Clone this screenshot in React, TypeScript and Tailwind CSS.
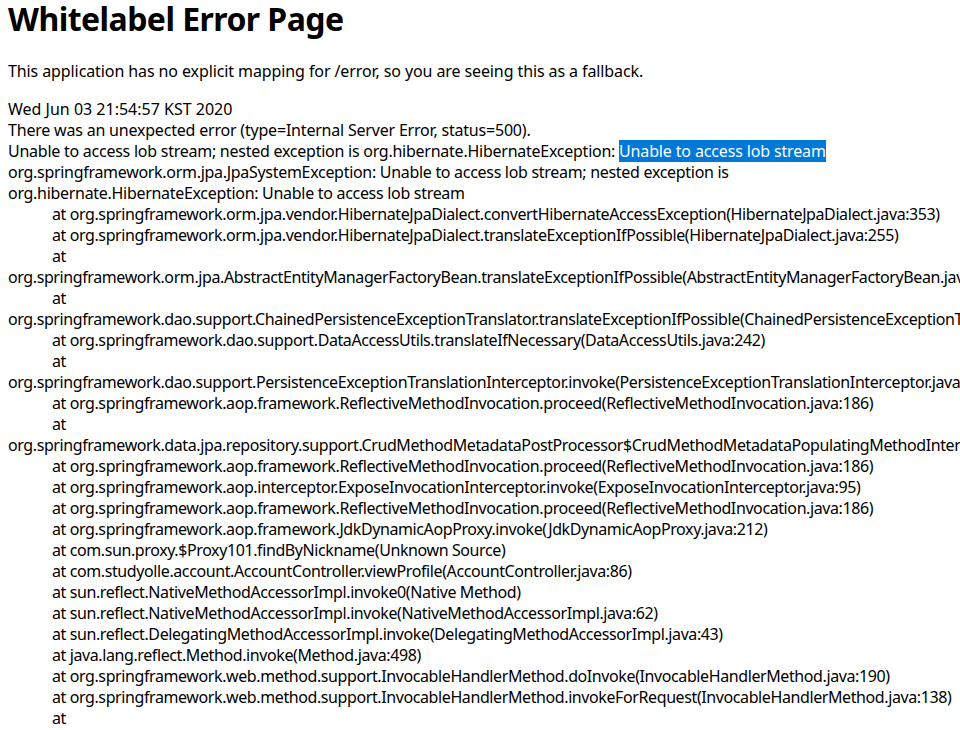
import React from "react";

const lines: { indent: boolean; text: string }[] = [
  { indent: true, text: "at org.springframework.orm.jpa.vendor.HibernateJpaDialect.convertHibernateAccessException(HibernateJpaDialect.java:353)" },
  { indent: true, text: "at org.springframework.orm.jpa.vendor.HibernateJpaDialect.translateExceptionIfPossible(HibernateJpaDialect.java:255)" },
  { indent: true, text: "at" },
  { indent: false, text: "org.springframework.orm.jpa.AbstractEntityManagerFactoryBean.translateExceptionIfPossible(AbstractEntityManagerFactoryBean.java:527)" },
  { indent: true, text: "at" },
  { indent: false, text: "org.springframework.dao.support.ChainedPersistenceExceptionTranslator.translateExceptionIfPossible(ChainedPersistenceExceptionTranslator.java:61)" },
  { indent: true, text: "at org.springframework.dao.support.DataAccessUtils.translateIfNecessary(DataAccessUtils.java:242)" },
  { indent: true, text: "at" },
  { indent: false, text: "org.springframework.dao.support.PersistenceExceptionTranslationInterceptor.invoke(PersistenceExceptionTranslationInterceptor.java:154)" },
  { indent: true, text: "at org.springframework.aop.framework.ReflectiveMethodInvocation.proceed(ReflectiveMethodInvocation.java:186)" },
  { indent: true, text: "at" },
  { indent: false, text: "org.springframework.data.jpa.repository.support.CrudMethodMetadataPostProcessor$CrudMethodMetadataPopulatingMethodInterceptor.invoke(CrudMethodMetadataPostProcessor.java:149)" },
  { indent: true, text: "at org.springframework.aop.framework.ReflectiveMethodInvocation.proceed(ReflectiveMethodInvocation.java:186)" },
  { indent: true, text: "at org.springframework.aop.interceptor.ExposeInvocationInterceptor.invoke(ExposeInvocationInterceptor.java:95)" },
  { indent: true, text: "at org.springframework.aop.framework.ReflectiveMethodInvocation.proceed(ReflectiveMethodInvocation.java:186)" },
  { indent: true, text: "at org.springframework.aop.framework.JdkDynamicAopProxy.invoke(JdkDynamicAopProxy.java:212)" },
  { indent: true, text: "at com.sun.proxy.$Proxy101.findByNickname(Unknown Source)" },
  { indent: true, text: "at com.studyolle.account.AccountController.viewProfile(AccountController.java:86)" },
  { indent: true, text: "at sun.reflect.NativeMethodAccessorImpl.invoke0(Native Method)" },
  { indent: true, text: "at sun.reflect.NativeMethodAccessorImpl.invoke(NativeMethodAccessorImpl.java:62)" },
  { indent: true, text: "at sun.reflect.DelegatingMethodAccessorImpl.invoke(DelegatingMethodAccessorImpl.java:43)" },
  { indent: true, text: "at java.lang.reflect.Method.invoke(Method.java:498)" },
  { indent: true, text: "at org.springframework.web.method.support.InvocableHandlerMethod.doInvoke(InvocableHandlerMethod.java:190)" },
  { indent: true, text: "at org.springframework.web.method.support.InvocableHandlerMethod.invokeForRequest(InvocableHandlerMethod.java:138)" },
  { indent: true, text: "at" },
];

export default function App() {
  return (
    <div
      className="h-[730px] w-[960px] overflow-hidden bg-white px-2 text-black"
      style={{ fontFamily: '"Noto Sans", "Noto Sans CJK KR", sans-serif' }}
    >
      <h1 className="-mt-[3px] mb-[20px] whitespace-nowrap text-[32px] font-bold leading-[44px] tracking-[-0.55px]">
        Whitelabel Error Page
      </h1>
      <p className="mb-[17px] whitespace-nowrap text-[16px] leading-[21px] tracking-[-0.1px]">
        This application has no explicit mapping for /error, so you are seeing this as a fallback.
      </p>
      <div className="text-[16px] leading-[21px] tracking-[-0.4px]">
        <div className="whitespace-nowrap tracking-[0px]">Wed Jun 03 21:54:57 KST 2020</div>
        <div className="whitespace-nowrap tracking-[-0.2px]">
          There was an unexpected error (type=Internal Server Error, status=500).
        </div>
        <div className="whitespace-pre tracking-[-0.25px]">
          Unable to access lob stream; nested exception is org.hibernate.HibernateException:{" "}
          <span className="bg-[#0078d7] tracking-[-0.15px] text-white">Unable to access lob stream</span>
        </div>
        <div className="whitespace-nowrap tracking-[-0.3px]">
          org.springframework.orm.jpa.JpaSystemException: Unable to access lob stream; nested exception is
        </div>
        <div className="whitespace-nowrap tracking-[-0.3px]">
          org.hibernate.HibernateException: Unable to access lob stream
        </div>
        {lines.map((l, i) => (
          <div key={i} className={l.indent ? "whitespace-nowrap pl-[44px]" : "whitespace-nowrap"}>
            {l.text}
          </div>
        ))}
      </div>
    </div>
  );
}
